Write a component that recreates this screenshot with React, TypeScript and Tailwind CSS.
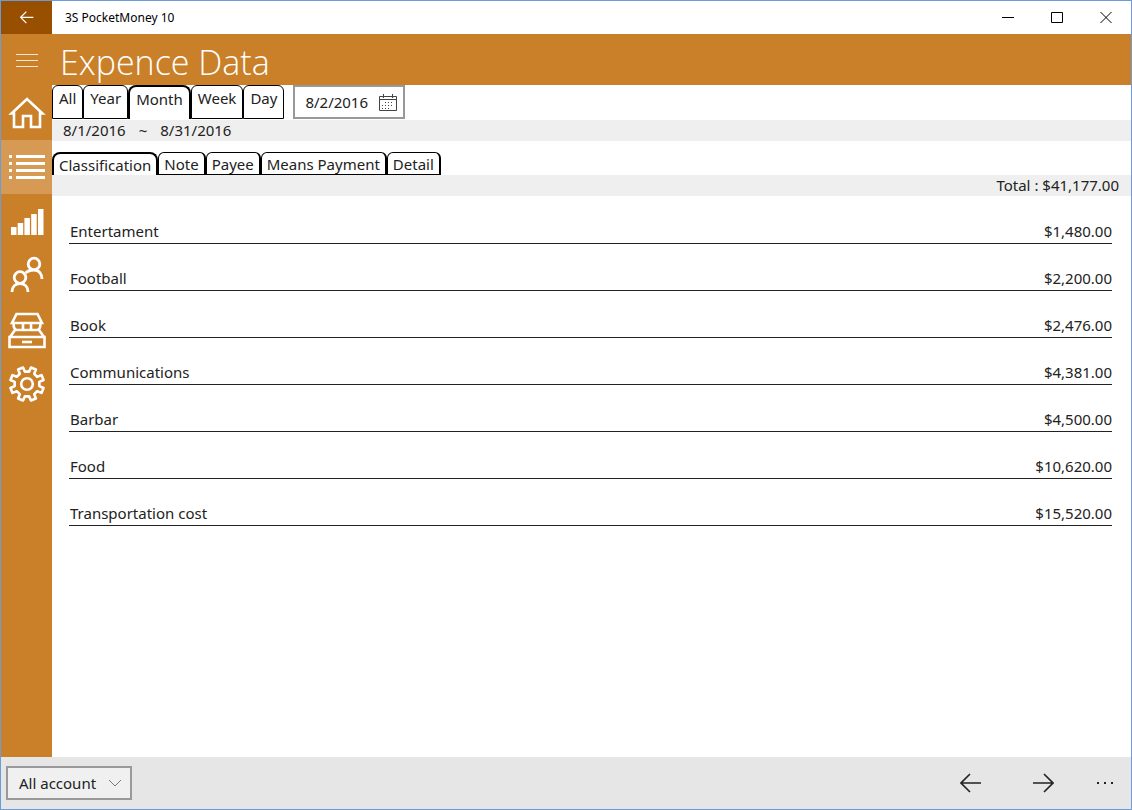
import { clsx } from 'clsx';
import { useState, type FC, type ReactNode } from 'react';

const PERIODS = ['All', 'Year', 'Month', 'Week', 'Day'];
const GROUPINGS = ['Classification', 'Note', 'Payee', 'Means Payment', 'Detail'];

const EXPENSES = [
    { name: 'Entertament', amount: '$1,480.00' },
    { name: 'Football', amount: '$2,200.00' },
    { name: 'Book', amount: '$2,476.00' },
    { name: 'Communications', amount: '$4,381.00' },
    { name: 'Barbar', amount: '$4,500.00' },
    { name: 'Food', amount: '$10,620.00' },
    { name: 'Transportation cost', amount: '$15,520.00' },
];

const NAV_ITEMS: { label: string; icon: ReactNode }[] = [
    { label: 'Home', icon: <path d="M4.5 20.5 20 6l15.500 14.500H33V34h-9V23h-8v11H7V20.500z" strokeWidth="2.6" /> },
    {
        label: 'Expence data',
        icon: <path d="M9 9.500h29M9 16.500h29M9 23.500h29M9 30.500h29M2 9.500h3M2 16.500h3M2 23.500h3M2 30.500h3" strokeWidth="3" />,
    },
    {
        label: 'Statistics',
        icon: <path d="M4 26h5.500v8H4zM10.700 22h5.500v12h-5.500zM17.400 17h5.500v17h-5.500zM24.200 13h5.500v21h-5.500zM31 8h5.500v26H31z" fill="currentColor" stroke="none" />,
    },
    {
        label: 'Members',
        icon: (
            <g strokeWidth="2.8">
                <circle cx="27" cy="9" r="5.800" />
                <circle cx="13" cy="22.500" r="5.800" />
                <path d="M5 37c0-5 3-8.500 8-8.500s8 3.500 8 8.500M18.500 18c2-2 5-3 8.500-3 5 0 8 4 8 9" />
            </g>
        ),
    },
    {
        label: 'Accounts',
        icon: (
            <g strokeWidth="2.6">
                <path d="M9.500 5h21l4.500 9H5zM6.500 14c0 4 1 7 3.500 7h20c2.500 0 3.500-3 3.500-7M16 14v7M24 14v7M8 21l-5 7M32 21l5 7M2.500 28h35v10h-35z" />
                <path d="M15 33h10" />
            </g>
        ),
    },
    { label: 'Settings', icon: <Gear /> },
];

const TabStrip: FC<{ label: string; tabs: string[]; initial: string; className: string }> = ({ label, tabs, initial, className }) => {
    const [selected, setSelected] = useState(initial);

    return (
        <div role="tablist" aria-label={label} className="flex">
            {tabs.map((tab) => (
                <button
                    key={tab}
                    role="tab"
                    aria-selected={tab === selected}
                    className={clsx(
                        'flex justify-center border-black bg-white whitespace-nowrap',
                        className,
                        tab === selected ? 'rounded-t-lg border-x-2 border-t-2' : 'rounded-t-md border',
                    )}
                    onClick={() => setSelected(tab)}
                >
                    {tab}
                </button>
            ))}
        </div>
    );
};

const Arrow: FC<{ className: string }> = ({ className }) => (
    <svg viewBox="0 0 22 20" className={className} fill="none" stroke="currentColor" aria-hidden>
        <path d="M21 10H1M10 1l-9 9 9 9" />
    </svg>
);

const App: FC = () => {
    const [navItem, setNavItem] = useState('Expence data');
    const [date, setDate] = useState('8/2/2016');

    return (
        <div className="flex min-h-screen flex-col border border-[#6b9bd8] bg-white font-['Noto_Sans','Open_Sans',sans-serif] text-[15px] leading-5 text-[#222222]">
            {/* Title bar */}
            <div className="flex h-[33px] items-center pr-px">
                <button aria-label="Back" className="flex h-full w-[51px] items-center justify-center bg-[#985000] text-white">
                    <Arrow className="w-[14px] stroke-2" />
                </button>
                <span className="flex-1 pl-[13px] text-xs text-black">3S PocketMoney 10</span>
                <WindowButton label="Minimize" path="M0 5.500h12" />
                <WindowButton label="Maximize" path="M.5.500h11v10H.500z" />
                <WindowButton label="Close" path="M.5 0l11 11M11.500 0l-11 11" />
            </div>

            <div className="flex flex-1">
                {/* Side menu */}
                <nav className="flex w-[51px] flex-col bg-[#ca7f29] text-white">
                    <button aria-label="Menu" className="flex h-13 items-center justify-center">
                        <svg viewBox="0 0 22 14" className="w-[22px]" stroke="#f6e6d2" aria-hidden>
                            <path d="M0 1.500h22M0 7.500h22M0 13.500h22" />
                        </svg>
                    </button>
                    {NAV_ITEMS.map(({ label, icon }) => (
                        <button
                            key={label}
                            aria-label={label}
                            className={clsx('flex h-[54px] items-center justify-center', label === navItem && 'bg-[#d69a55]')}
                            onClick={() => setNavItem(label)}
                        >
                            <svg viewBox="0 0 40 40" className="size-10" fill="none" stroke="currentColor" aria-hidden>
                                {icon}
                            </svg>
                        </button>
                    ))}
                </nav>

                <main className="flex min-w-0 flex-1 flex-col">
                    <h1 className="h-[51px] bg-[#ca7f29] pl-2 font-['Open_Sans'] text-[34px] leading-[56px] font-light text-white">Expence Data</h1>

                    <div className="flex h-[35px] gap-[9px]">
                        <TabStrip label="Period" tabs={PERIODS} initial="Month" className="h-[34px] px-[6px] pt-[2px]" />
                        <div className="flex h-[34px] w-28 items-center border-2 border-[#999999] pr-[6px] pl-[10px]">
                            <input aria-label="Date" className="w-full min-w-0 outline-none" value={date} onChange={(e) => setDate(e.target.value)} />
                            <button aria-label="Open calendar">
                                <CalendarIcon />
                            </button>
                        </div>
                    </div>
                    <p className="flex gap-[13px] bg-[#efefef] pb-px pl-[11px]">
                        <span>8/1/2016</span>
                        <span>~</span>
                        <span>8/31/2016</span>
                    </p>

                    <div className="pt-[11px]">
                        <TabStrip label="Group by" tabs={GROUPINGS} initial="Classification" className="h-[23px] items-center border-r-2 px-[5px]" />
                    </div>
                    <p className="bg-[#efefef] pr-3 pb-px text-right">Total : $41,177.00</p>

                    <div className="pr-[19px] pl-[17px]">
                        <table className="w-full">
                            <tbody>
                                {EXPENSES.map(({ name, amount }) => (
                                    <tr key={name} className="h-[47px] border-b border-[#222222]">
                                        <th scope="row" className="pt-6 pb-px pl-px text-left font-normal">
                                            {name}
                                        </th>
                                        <td className="pt-6 pb-px text-right">{amount}</td>
                                    </tr>
                                ))}
                            </tbody>
                        </table>
                    </div>
                </main>
            </div>

            {/* Command bar */}
            <footer className="flex h-[52px] items-center bg-[#e6e6e6] pl-[5px]">
                <div className="relative">
                    <select aria-label="Account" className="h-[34px] w-[126px] appearance-none border-2 border-[#999999] bg-[#f0f0f0] pl-[11px]">
                        <option>All account</option>
                    </select>
                    <svg viewBox="0 0 14 8" className="pointer-events-none absolute top-[13px] right-[10px] w-[14px]" fill="none" stroke="#777777" aria-hidden>
                        <path d="M1 1l6 6 6-6" />
                    </svg>
                </div>
                <div className="ml-auto flex h-full">
                    <button aria-label="Previous" className="flex w-18 items-center justify-center">
                        <Arrow className="w-[22px] stroke-[1.6]" />
                    </button>
                    <button aria-label="Next" className="flex w-18 items-center justify-center">
                        <Arrow className="w-[22px] rotate-180 stroke-[1.6]" />
                    </button>
                    <button aria-label="More" className="flex w-[52px] items-center justify-center">
                        <svg viewBox="0 0 16 2" className="w-4" fill="currentColor" aria-hidden>
                            <path d="M0 0h2v2H0zM7 0h2v2H7zM14 0h2v2h-2z" />
                        </svg>
                    </button>
                </div>
            </footer>
        </div>
    );
};

export default App;

function WindowButton({ label, path }: { label: string; path: string }) {
    return (
        <button aria-label={label} className="flex h-full w-[49px] items-center justify-center text-black">
            <svg viewBox="0 0 12 12" className="size-3" fill="none" stroke="currentColor" aria-hidden>
                <path d={path} />
            </svg>
        </button>
    );
}

function CalendarIcon() {
    return (
        <svg viewBox="0 0 18 17" className="block h-[17px] w-[18px]" fill="none" stroke="#444444" aria-hidden>
            <path d="M.5 2.500h17v14H.500zM.5 5.500h17M4.500 0v4M13.500 0v4" />
            <path d="M6 8.500h9M3 11.500h12M3 14.500h9" strokeDasharray="1 2" />
        </svg>
    );
}

// Eight teeth, none of them pointing straight up
function Gear() {
    const points = Array.from({ length: 8 }).flatMap((_, tooth) =>
        [
            [-13, 12.5],
            [-9, 17],
            [9, 17],
            [13, 12.5],
        ].map(([offset, radius]) => {
            const angle = ((tooth * 45 + 22.5 + offset) * Math.PI) / 180;
            return `${20 + radius * Math.cos(angle)},${21 + radius * Math.sin(angle)}`;
        }),
    );

    return (
        <g strokeWidth="2.6" strokeLinejoin="round">
            <polygon points={points.join(' ')} />
            <circle cx="20" cy="21" r="5.800" />
        </g>
    );
}
